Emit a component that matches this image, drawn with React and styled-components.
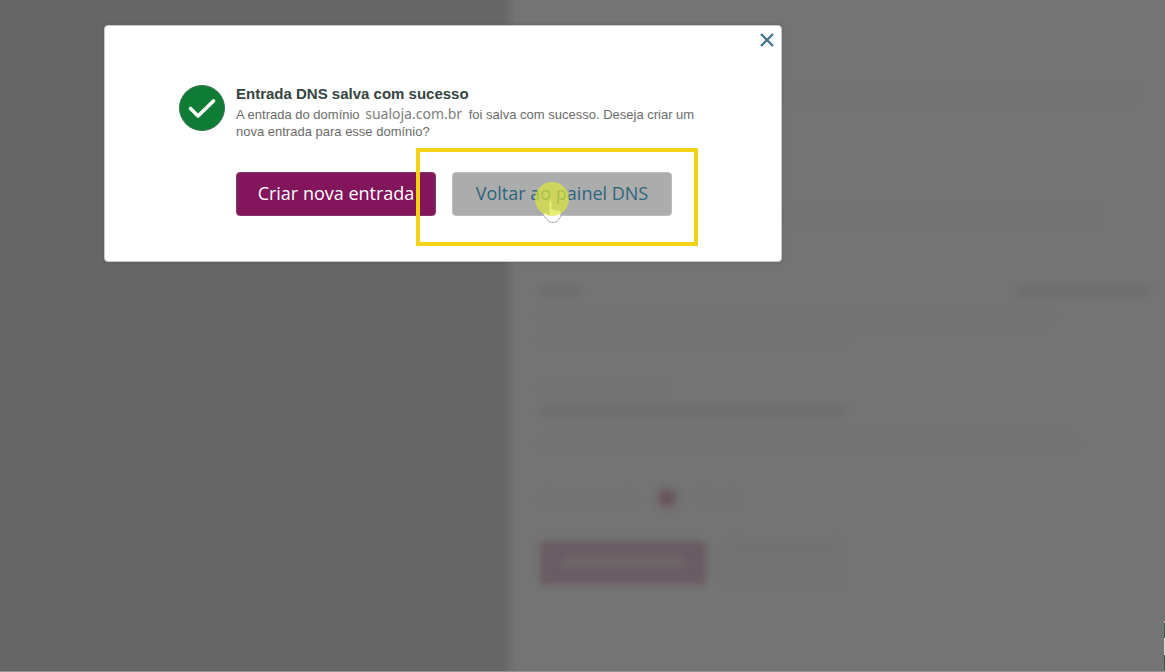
import React from "react";
import styled, { createGlobalStyle } from "styled-components";

const App = () => {
  return (
    <>
      <GlobalStyle />
      <Page>
        <Backdrop aria-hidden="true">
          <Sidebar />
          <Panel>
            <Section $height={67}>
              <Line $width="38%" />
            </Section>
            <Section $height={121}>
              <Line $width="98%" />
            </Section>
            <Section $height={75}>
              <Line $width="92%" />
            </Section>
            <Section $height={100}>
              <SplitRow>
                <Line $width="40px" $strong />
                <Line $width="132px" $strong />
              </SplitRow>
              <Line $width="84%" />
              <Line $width="50%" />
            </Section>
            <Section $height={50}>
              <Line $width="126px" />
              <Line $width="50%" $strong />
            </Section>
            <Section $height={49}>
              <Line $width="88%" />
            </Section>
            <OptionRow>
              <Line $width="96px" />
              <Dot />
              <Line $width="40px" />
            </OptionRow>
            <ButtonRow>
              <GhostButton $primary>
                <GhostLabel />
              </GhostButton>
              <GhostButton />
            </ButtonRow>
          </Panel>
        </Backdrop>
        <Footer />
        <EdgeStrip />
        <Overlay>
          <Dialog role="dialog" aria-modal="true" aria-labelledby="dialog-title">
            <CloseButton type="button" aria-label="Fechar">
              <svg width="14" height="14" viewBox="0 0 14 14">
                <path d="M1 1L13 13M13 1L1 13" stroke="#3d6f8b" strokeWidth="2.2" />
              </svg>
            </CloseButton>
            <CheckIcon />
            <Message>
              <Title id="dialog-title">Entrada DNS salva com sucesso</Title>
              <Text>
                A entrada do domínio <Domain>sualoja.com.br</Domain> foi salva com sucesso. Deseja criar um nova
                entrada para esse domínio?
              </Text>
              <Actions>
                <Button type="button" $primary>
                  Criar nova entrada
                </Button>
                <Target>
                  <Button type="button">Voltar ao painel DNS</Button>
                  <Highlight />
                  <Pointer />
                </Target>
              </Actions>
            </Message>
          </Dialog>
        </Overlay>
      </Page>
    </>
  );
};

const CheckIcon = () => (
  <CheckSvg width="46" height="46" viewBox="0 0 46 46">
    <circle cx="23" cy="23" r="22.5" fill="#0f7c35" stroke="#3b6f50" />
    <path
      d="M11.5 23.5L19 31L34.500 16"
      fill="none"
      stroke="#fff"
      strokeWidth="3.6"
      strokeLinecap="round"
      strokeLinejoin="round"
    />
  </CheckSvg>
);

const Pointer = () => (
  <PointerSvg width="34" height="42" viewBox="0 0 34 42">
    <path
      d="M14 20c0-2 3-2 3 0v7l7 1.500c2 .5 2.500 2 2 4-.8 4-3.500 8-8 8-4.500 0-6-3-9.500-7.500-1.500-2 .5-3.500 2.500-2.500l3 2z"
      fill="#fff"
      stroke="#a8a8a8"
    />
    <circle cx="17" cy="17" r="17" fill="#dce739" fillOpacity="0.7" />
  </PointerSvg>
);

export default App;

const GlobalStyle = createGlobalStyle`
  * {
    box-sizing: border-box;
  }

  body {
    margin: 0;
    background-color: #666;
    font-family: "Liberation Sans", Arial, sans-serif;
  }
`;

const Page = styled.div`
  position: relative;
  display: flex;
  flex-direction: column;
  min-height: 100vh;
  overflow: hidden;
`;

const Backdrop = styled.div`
  flex: 1;
  display: grid;
  grid-template-columns: 504px 1fr;
`;

const Sidebar = styled.div`
  background-color: #666;
`;

const Panel = styled.div`
  display: flex;
  flex-direction: column;
  padding: 23px 16px 0 36px;
  background: linear-gradient(90deg, #676767, #747474 12px);
`;

const Section = styled.div`
  display: flex;
  flex-direction: column;
  gap: 10px;
  height: ${props => props.$height}px;
`;

const Line = styled.span`
  display: block;
  width: ${props => props.$width};
  height: 10px;
  border-radius: 4px;
  background-color: ${props => (props.$strong ? "#6d6d6d" : "#727272")};
  filter: blur(3px);
`;

const SplitRow = styled.div`
  display: flex;
  justify-content: space-between;
  margin-bottom: 8px;
`;

const OptionRow = styled.div`
  display: flex;
  align-items: center;
  gap: 22px;
  height: 26px;
`;

const Dot = styled.span`
  width: 18px;
  height: 18px;
  border-radius: 50%;
  background-color: #674f59;
  filter: blur(4px);
`;

const ButtonRow = styled.div`
  display: flex;
  gap: 24px;
  margin-top: 30px;
`;

const GhostButton = styled.div`
  display: flex;
  align-items: center;
  justify-content: center;
  width: ${props => (props.$primary ? 166 : 110)}px;
  height: 44px;
  border-radius: 4px;
  background-color: ${props => (props.$primary ? "#6a5c63" : "#727272")};
  filter: blur(3px);
`;

const GhostLabel = styled.span`
  width: 122px;
  height: 10px;
  border-radius: 4px;
  background-color: #6d686b;
`;

const Footer = styled.div`
  height: 1px;
  background-color: #949192;
`;

const EdgeStrip = styled.div`
  position: absolute;
  right: 0;
  bottom: 2px;
  width: 1px;
  height: 49px;
  background: linear-gradient(#b5b5b5 2px, #28694b 2px 17px, #d9d9d9 17px 34px, #35584b 34px);
`;

const Overlay = styled.div`
  position: absolute;
  inset: 0;
  padding: 25px 104px;
`;

const Dialog = styled.div`
  position: relative;
  display: flex;
  gap: 11px;
  max-width: 678px;
  padding: 59px 74px 45px;
  border: 1px solid #c9c9c9;
  border-radius: 4px;
  background-color: #fff;
  box-shadow: 0 0 4px rgba(0, 0, 0, 0.15);
`;

const CloseButton = styled.button`
  position: absolute;
  top: 7px;
  right: 7px;
  display: flex;
  padding: 0;
  border: none;
  background: none;
  cursor: pointer;
`;

const CheckSvg = styled.svg`
  flex-shrink: 0;
`;

const Message = styled.div`
  flex: 1;
`;

const Title = styled.h1`
  margin: 0 0 3px;
  color: #34443f;
  font-size: 15px;
  font-weight: 700;
  line-height: 18px;
`;

const Text = styled.p`
  margin: 0;
  color: #6b6b6b;
  font-size: 13px;
  line-height: 17px;
`;

const Domain = styled.span`
  margin: 0 3px 0 2px;
  color: #7d7d7d;
  font-family: "Noto Sans", sans-serif;
  font-size: 14px;
  line-height: 1;
`;

const Actions = styled.div`
  display: flex;
  gap: 16px;
  margin-top: 32px;
`;

const Button = styled.button`
  width: ${props => (props.$primary ? 200 : 220)}px;
  height: 44px;
  padding: 0 0 2px;
  border: 1px solid ${props => (props.$primary ? "#85356a" : "#bcbcbc")};
  border-radius: 4px;
  background-color: ${props => (props.$primary ? "#82155b" : "#acacad")};
  color: ${props => (props.$primary ? "#fff" : "#2c657c")};
  font-family: "Open Sans", sans-serif;
  font-size: 18px;
  font-weight: 500;
  white-space: nowrap;
  cursor: pointer;
`;

const Target = styled.div`
  position: relative;
`;

const Highlight = styled.div`
  position: absolute;
  inset: -24px -26px -30px -36px;
  border: 4px solid #f3d216;
  pointer-events: none;
`;

const PointerSvg = styled.svg`
  position: absolute;
  top: 10px;
  left: 83px;
  pointer-events: none;
`;
